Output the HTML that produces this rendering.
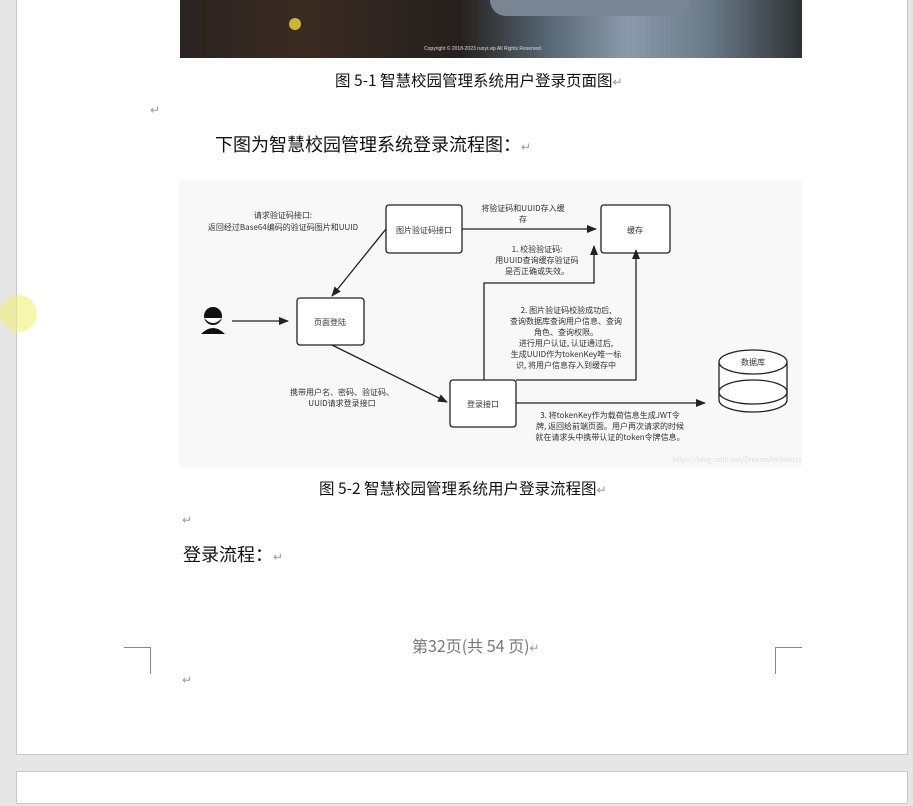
<!DOCTYPE html>
<html><head><meta charset="utf-8"><style>
body{margin:0;width:913px;height:806px;background:#e6e6e6;position:relative;overflow:hidden;font-family:"Liberation Serif","Noto Sans CJK SC",sans-serif;}
.page{position:absolute;left:16px;top:-2px;width:890px;height:755px;background:#fff;border:1px solid #c8c8c8;}
.page2{position:absolute;left:16px;top:771px;width:890px;height:31px;background:#fff;border:1px solid #c8c8c8;}
.t{position:absolute;white-space:nowrap;color:#111;font-family:"Noto Sans CJK SC",sans-serif;}
.r{color:#999;font-size:12px;}
</style></head><body>
<div class="page"></div><div class="page2"></div>
<div style="position:absolute;left:180px;top:0;width:622px;height:58px;background:linear-gradient(90deg,#2a2320 0%,#3a2a22 20%,#25201e 45%,#5a6a78 60%,#8a9aaa 72%,#6b7a88 85%,#2e3236 100%);"></div>
<div style="position:absolute;left:490px;top:0;width:200px;height:16px;background:#7a8594;border-radius:0 0 20px 20px;"></div>
<div style="position:absolute;left:289px;top:18px;width:12px;height:12px;border-radius:50%;background:#c8b83a;"></div>
<div class="t" style="left:424px;top:46px;font-size:5px;color:#ddd;font-family:'Liberation Sans',sans-serif;">Copyright © 2018-2023 ruoyi.vip All Rights Reserved.</div>
<div class="t" style="left:335px;top:69px;font-size:15.5px;">图 5-1 智慧校园管理系统用户登录页面图<span class="r">↵</span></div>
<div class="t r" style="left:150px;top:101px;">↵</div>
<div class="t" style="left:215px;top:131px;font-size:18px;">下图为智慧校园管理系统登录流程图：<span class="r">↵</span></div>
<svg style="position:absolute;left:0;top:0" width="913" height="806" font-family="Noto Sans CJK SC,sans-serif" font-size="8" fill="#333">
<defs><marker id="a" markerWidth="10" markerHeight="8" refX="9" refY="4" orient="auto" markerUnits="userSpaceOnUse"><path d="M0,0 L10,4 L0,8z" fill="#222"/></marker></defs>
<rect x="179" y="180" width="623" height="287" fill="#f8f8f8"/>
<g fill="#fff" stroke="#222" stroke-width="1.3">
<rect x="386" y="205" width="76" height="48" rx="3"/>
<rect x="601" y="205" width="69" height="48" rx="3"/>
<rect x="297" y="298" width="67" height="47" rx="3"/>
<rect x="450" y="380" width="66" height="47" rx="3"/>
<path d="M719,362 L719,400 A34,12 0 0 0 787,400 L787,362"/>
<ellipse cx="753" cy="362" rx="34" ry="12"/>
<ellipse cx="753" cy="392" rx="34" ry="12"/>
</g>
<g stroke="#222" stroke-width="1.3" fill="none" marker-end="url(#a)">
<line x1="462" y1="229" x2="596" y2="229"/>
<line x1="386" y1="229" x2="332" y2="296"/>
<line x1="232" y1="321" x2="288" y2="321"/>
<line x1="332" y1="345" x2="447" y2="402"/>
<polyline points="484,380 484,283 594,283 594,246"/>
<polyline points="516,380 636,380 636,250"/>
<line x1="516" y1="403" x2="705" y2="403"/>
</g>
<circle cx="213" cy="316" r="9" fill="#111"/><path d="M204,318 Q213,328 222,318" fill="#fff"/>
<path d="M201,334 Q213,322 225,334z" fill="#111"/>
<g text-anchor="middle">
<text x="424" y="233">图片验证码接口</text><text x="635" y="233">缓存</text>
<text x="330" y="325">页面登陆</text><text x="483" y="407">登录接口</text><text x="753" y="365">数据库</text>
<text x="283" y="218">请求验证码接口:</text><text x="283" y="230">返回经过Base64编码的验证码图片和UUID</text>
<text x="523" y="211">将验证码和UUID存入缓</text><text x="523" y="222">存</text>
<text x="537" y="252">1. 校验验证码:</text><text x="537" y="263">用UUID查询缓存验证码</text><text x="537" y="274">是否正确或失效。</text>
<text x="566" y="313">2. 图片验证码校验成功后,</text><text x="566" y="324">查询数据库查询用户信息、查询</text><text x="566" y="335">角色、查询权限。</text><text x="566" y="346">进行用户认证, 认证通过后,</text><text x="566" y="357">生成UUID作为tokenKey唯一标</text><text x="566" y="368">识, 将用户信息存入到缓存中</text>
<text x="342" y="395">携带用户名、密码、验证码、</text><text x="342" y="406">UUID请求登录接口</text>
<text x="610" y="418">3. 将tokenKey作为载荷信息生成JWT令</text><text x="610" y="429">牌, 返回给前端页面。用户再次请求的时候</text><text x="610" y="440">就在请求头中携带认证的token令牌信息。</text>
<text x="737" y="462" fill="#ddd" font-size="7">https://blog.csdn.net/DreamsArchitects</text>
</g>
</svg>
<div class="t" style="left:319px;top:477px;font-size:15.5px;">图 5-2 智慧校园管理系统用户登录流程图<span class="r">↵</span></div>
<div class="t r" style="left:182px;top:511px;">↵</div>
<div class="t" style="left:183px;top:541px;font-size:18px;">登录流程：<span class="r">↵</span></div>
<div class="t" style="left:412px;top:633px;font-size:16px;color:#777;">第32页(共 54 页)<span class="r">↵</span></div>
<div style="position:absolute;left:124px;top:647px;width:26px;height:26px;border-top:1px solid #888;border-right:1px solid #888;"></div>
<div style="position:absolute;left:775px;top:647px;width:26px;height:26px;border-top:1px solid #888;border-left:1px solid #888;"></div>
<div class="t r" style="left:182px;top:671px;">↵</div>
<div style="position:absolute;left:0;top:295px;width:37px;height:37px;border-radius:50%;background:rgba(240,240,120,0.6);"></div>
</body></html>
